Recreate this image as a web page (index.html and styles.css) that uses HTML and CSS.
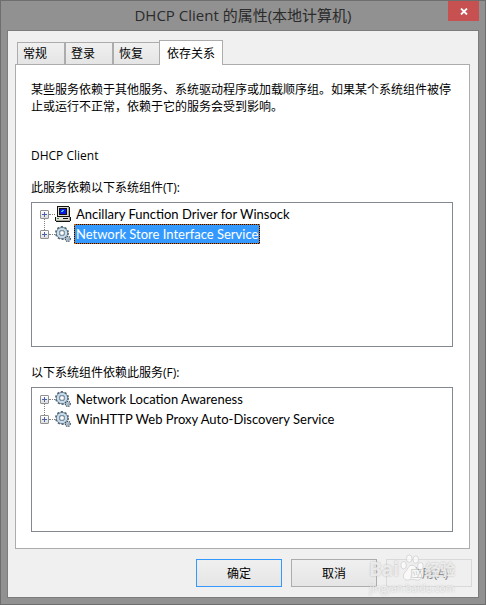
FILE: index.html
```html
<!DOCTYPE html>
<html lang="zh-CN">
<head>
    <meta charset="UTF-8">
    <meta name="viewport" content="width=device-width, initial-scale=1.0">
    <title>DHCP Client 的属性(本地计算机)</title>
    <link rel="stylesheet" href="styles.css">
</head>
<body>
    <!-- Shared icons -->
    <svg class="sprite" aria-hidden="true">
        <symbol id="gears" viewBox="0 0 16 16">
            <circle cx="7" cy="7" r="6" fill="none" stroke="#5b6b78" stroke-width="2" stroke-dasharray="2.1 1.67"/>
            <circle cx="7" cy="7" r="4.2" fill="none" stroke="#53687a" stroke-width="3.4"/>
            <circle cx="7" cy="7" r="4.1" fill="none" stroke="#c6dcec" stroke-width="2.4"/>
            <circle cx="7" cy="7" r="2.4" fill="#fff" stroke="#5f7484" stroke-width="0.8"/>
            <circle cx="12.8" cy="12.8" r="2.5" fill="#c6dcec" stroke="#45525e" stroke-width="1.3" stroke-dasharray="1.3 0.8"/>
            <circle cx="12.8" cy="12.8" r="0.9" fill="#fff" stroke="#53687a" stroke-width="0.5"/>
        </symbol>
        <symbol id="computer" viewBox="0 0 16 16" shape-rendering="crispEdges">
            <path fill="#111" d="M2 0h12v1h1v10h1v4h-1v1H1v-1H0v-4h2z"/>
            <path fill="#dedcd4" d="M3 1h10v9H3z"/>
            <path fill="#a5a59d" d="M13 1h1v9h-1z"/>
            <path fill="#111" d="M4 2h8v7H4z"/>
            <path fill="#0a18e0" d="M5 3h6v5H5z"/>
            <path fill="#35c8f0" d="M7 4h2v1H7zM6 5h2v1H6z"/>
            <path fill="#e4e2da" d="M1 11h13v3H1z"/>
            <path fill="#a5a59d" d="M1 14h13v1H1zM14 11h1v4h-1z"/>
            <path fill="#111" d="M8 12h5v1H8z"/>
            <path fill="#28a028" d="M2 12h2v1H2z"/>
        </symbol>
    </svg>

    <div class="window">
        <header class="titlebar">
            <h1>DHCP Client 的属性(本地计算机)</h1>
            <button type="button" class="close" aria-label="关闭">
                <svg width="8" height="7" viewBox="0 0 8 7"><path d="M1 0.5L7 6.5M7 0.5L1 6.5" stroke="#fff" stroke-width="1.8"/></svg>
            </button>
        </header>

        <main class="client">
            <div class="tabs" role="tablist">
                <button type="button" class="tab" role="tab">常规</button>
                <button type="button" class="tab" role="tab">登录</button>
                <button type="button" class="tab" role="tab">恢复</button>
                <button type="button" class="tab active" role="tab" aria-selected="true">依存关系</button>
            </div>

            <section class="panel" role="tabpanel">
                <p class="intro">某些服务依赖于其他服务、系统驱动程序或加载顺序组。如果某个系统组件被停止或运行不正常，依赖于它的服务会受到影响。</p>
                <p class="service">DHCP Client</p>

                <h2 id="depends-on">此服务依赖以下系统组件(T):</h2>
                <ul class="tree" role="tree" aria-labelledby="depends-on">
                    <li role="treeitem">
                        <button type="button" class="expand" aria-label="展开"></button>
                        <svg class="icon"><use href="#computer"/></svg>
                        <span class="name">Ancillary Function Driver for Winsock</span>
                    </li>
                    <li role="treeitem">
                        <button type="button" class="expand" aria-label="展开"></button>
                        <svg class="icon"><use href="#gears"/></svg>
                        <span class="name selected">Network Store Interface Service</span>
                    </li>
                </ul>

                <h2 id="dependents">以下系统组件依赖此服务(F):</h2>
                <ul class="tree" role="tree" aria-labelledby="dependents">
                    <li role="treeitem">
                        <button type="button" class="expand" aria-label="展开"></button>
                        <svg class="icon"><use href="#gears"/></svg>
                        <span class="name">Network Location Awareness</span>
                    </li>
                    <li role="treeitem">
                        <button type="button" class="expand" aria-label="展开"></button>
                        <svg class="icon"><use href="#gears"/></svg>
                        <span class="name">WinHTTP Web Proxy Auto-Discovery Service</span>
                    </li>
                </ul>
            </section>

            <footer class="actions">
                <button type="button" class="btn default">确定</button>
                <button type="button" class="btn">取消</button>
                <button type="button" class="btn" disabled>应用(A)</button>
            </footer>
        </main>

        <div class="watermark">
            <div class="brand">
                <span>Bai</span>
                <svg width="26" height="28" viewBox="0 0 26 30">
                    <ellipse cx="4" cy="12" rx="3" ry="4"/>
                    <ellipse cx="10" cy="5" rx="3" ry="4"/>
                    <ellipse cx="17" cy="6" rx="3" ry="4"/>
                    <ellipse cx="22" cy="13" rx="3" ry="4"/>
                    <path d="M13 12c-4 0-4 4-7 7-4 4-2 9 2 9 2 0 3-1 5-1s4 1 6 1c4 0 6-5 2-9-3-3-4-7-8-7z"/>
                </svg>
                <span class="cn">经验</span>
            </div>
            <div class="site">jingyan.baidu.com</div>
        </div>
    </div>
</body>
</html>
```
FILE: styles.css
```css
* {
    box-sizing: border-box;
}
body {
    margin: 0;
    font-family: "Open Sans", "Noto Sans CJK SC", sans-serif;
    font-size: 12px;
    line-height: 17px;
    color: #000;
}
button {
    font: inherit;
    color: inherit;
    padding: 0;
    margin: 0;
}
h1, h2, p, ul {
    margin: 0;
    padding: 0;
    font-weight: normal;
}
.sprite {
    position: absolute;
    width: 0;
    height: 0;
}

/* Window frame */
.window {
    position: relative;
    display: flex;
    flex-direction: column;
    min-height: 100vh;
    padding: 0 6px 6px;
    background-color: #919191;
    border: 1px solid #6e6e6e;
}
.titlebar {
    display: flex;
    height: 29px;
    align-items: center;
}
.titlebar h1 {
    flex: 1;
    padding-left: 31px;
    font-size: 15px;
    line-height: 29px;
    text-align: center;
    color: #2b2b2b;
}
.close {
    display: flex;
    align-items: center;
    justify-content: center;
    align-self: flex-start;
    width: 31px;
    height: 20px;
    border: none;
    background-color: #c75050;
}
.client {
    flex: 1;
    display: flex;
    flex-direction: column;
    padding: 9px 8px 10px 7px;
    background-color: #f0f0f0;
    border: 1px solid #7c7c7c;
}

/* Tabs */
.tabs {
    display: flex;
    align-items: flex-end;
    padding-left: 2px;
}
.tab {
    height: 22px;
    padding: 0 17px 0 5px;
    border: 1px solid #acacac;
    border-bottom: none;
    background: linear-gradient(#f0f0f0, #e5e5e5);
}
.tab.active {
    z-index: 1;
    height: 25px;
    margin: 0 0 -1px -2px;
    padding: 0 7px;
    background: #fff;
}
.panel {
    flex: 1;
    display: flex;
    flex-direction: column;
    padding: 16px 16px 16px 15px;
    background-color: #fff;
    border: 1px solid #acacac;
}
.service {
    margin: 32px 0 15px;
}
.panel h2 {
    font-size: 12px;
    margin-bottom: 6px;
}

/* Trees */
.tree {
    flex: 1;
    min-height: 60px;
    padding: 1px 8px;
    list-style: none;
    border: 1px solid #828790;
}
.tree + h2 {
    margin-top: 17px;
}
.tree li {
    position: relative;
    display: flex;
    align-items: center;
    height: 20px;
}
.tree li::before {
    content: "";
    position: absolute;
    left: 9px;
    top: 10px;
    width: 6px;
    border-top: 1px dotted #808080;
}
.tree li + li::after {
    content: "";
    position: absolute;
    left: 4px;
    top: -5px;
    height: 11px;
    border-left: 1px dotted #808080;
}
.expand {
    width: 9px;
    height: 9px;
    border: 1px solid #919191;
    border-radius: 1px;
    background:
        linear-gradient(#4b63a7, #4b63a7) center / 5px 1px no-repeat,
        linear-gradient(#4b63a7, #4b63a7) center / 1px 5px no-repeat,
        linear-gradient(#fff, #dcdcdc);
}
.icon {
    width: 16px;
    height: 16px;
    margin: 0 3px 0 6px;
}
.name {
    padding: 0 1px;
    font-family: Lato, "Noto Sans CJK SC", sans-serif;
    font-size: 13px;
    line-height: 18px;
    border: 1px solid transparent;
}
.name.selected {
    color: #fff;
    background:
        linear-gradient(#3399ff, #3399ff) padding-box,
        linear-gradient(#000, #000) border-box;
    border: 1px dotted #cc6600;
}

/* Buttons */
.actions {
    display: flex;
    justify-content: flex-end;
    gap: 9px;
    padding-top: 10px;
    margin-right: -2px;
}
.btn {
    width: 86px;
    height: 28px;
    border: 1px solid #acacac;
    background: linear-gradient(#f0f0f0, #e5e5e5);
}
.btn.default {
    border-color: #3399ff;
}
.btn:disabled {
    color: #838383;
    border-color: #d9d9d9;
    background: #efefef;
}

/* Watermark over the lower right corner */
.watermark {
    position: absolute;
    right: 28px;
    bottom: 10px;
    width: 90px;
    color: rgba(255, 255, 255, 0.7);
    text-shadow: 0 0 2px #b0b0b0;
    pointer-events: none;
}
.brand {
    display: flex;
    align-items: flex-end;
    justify-content: center;
    font-size: 19px;
    font-weight: bold;
    line-height: 26px;
}
.brand svg {
    fill: rgba(255, 255, 255, 0.6);
    stroke: #c8c8c8;
    stroke-width: 0.7;
    flex: none;
}
.brand span {
    white-space: nowrap;
}
.brand .cn {
    font-size: 15px;
}
.site {
    font-size: 10px;
    line-height: 12px;
    text-align: center;
}
```
